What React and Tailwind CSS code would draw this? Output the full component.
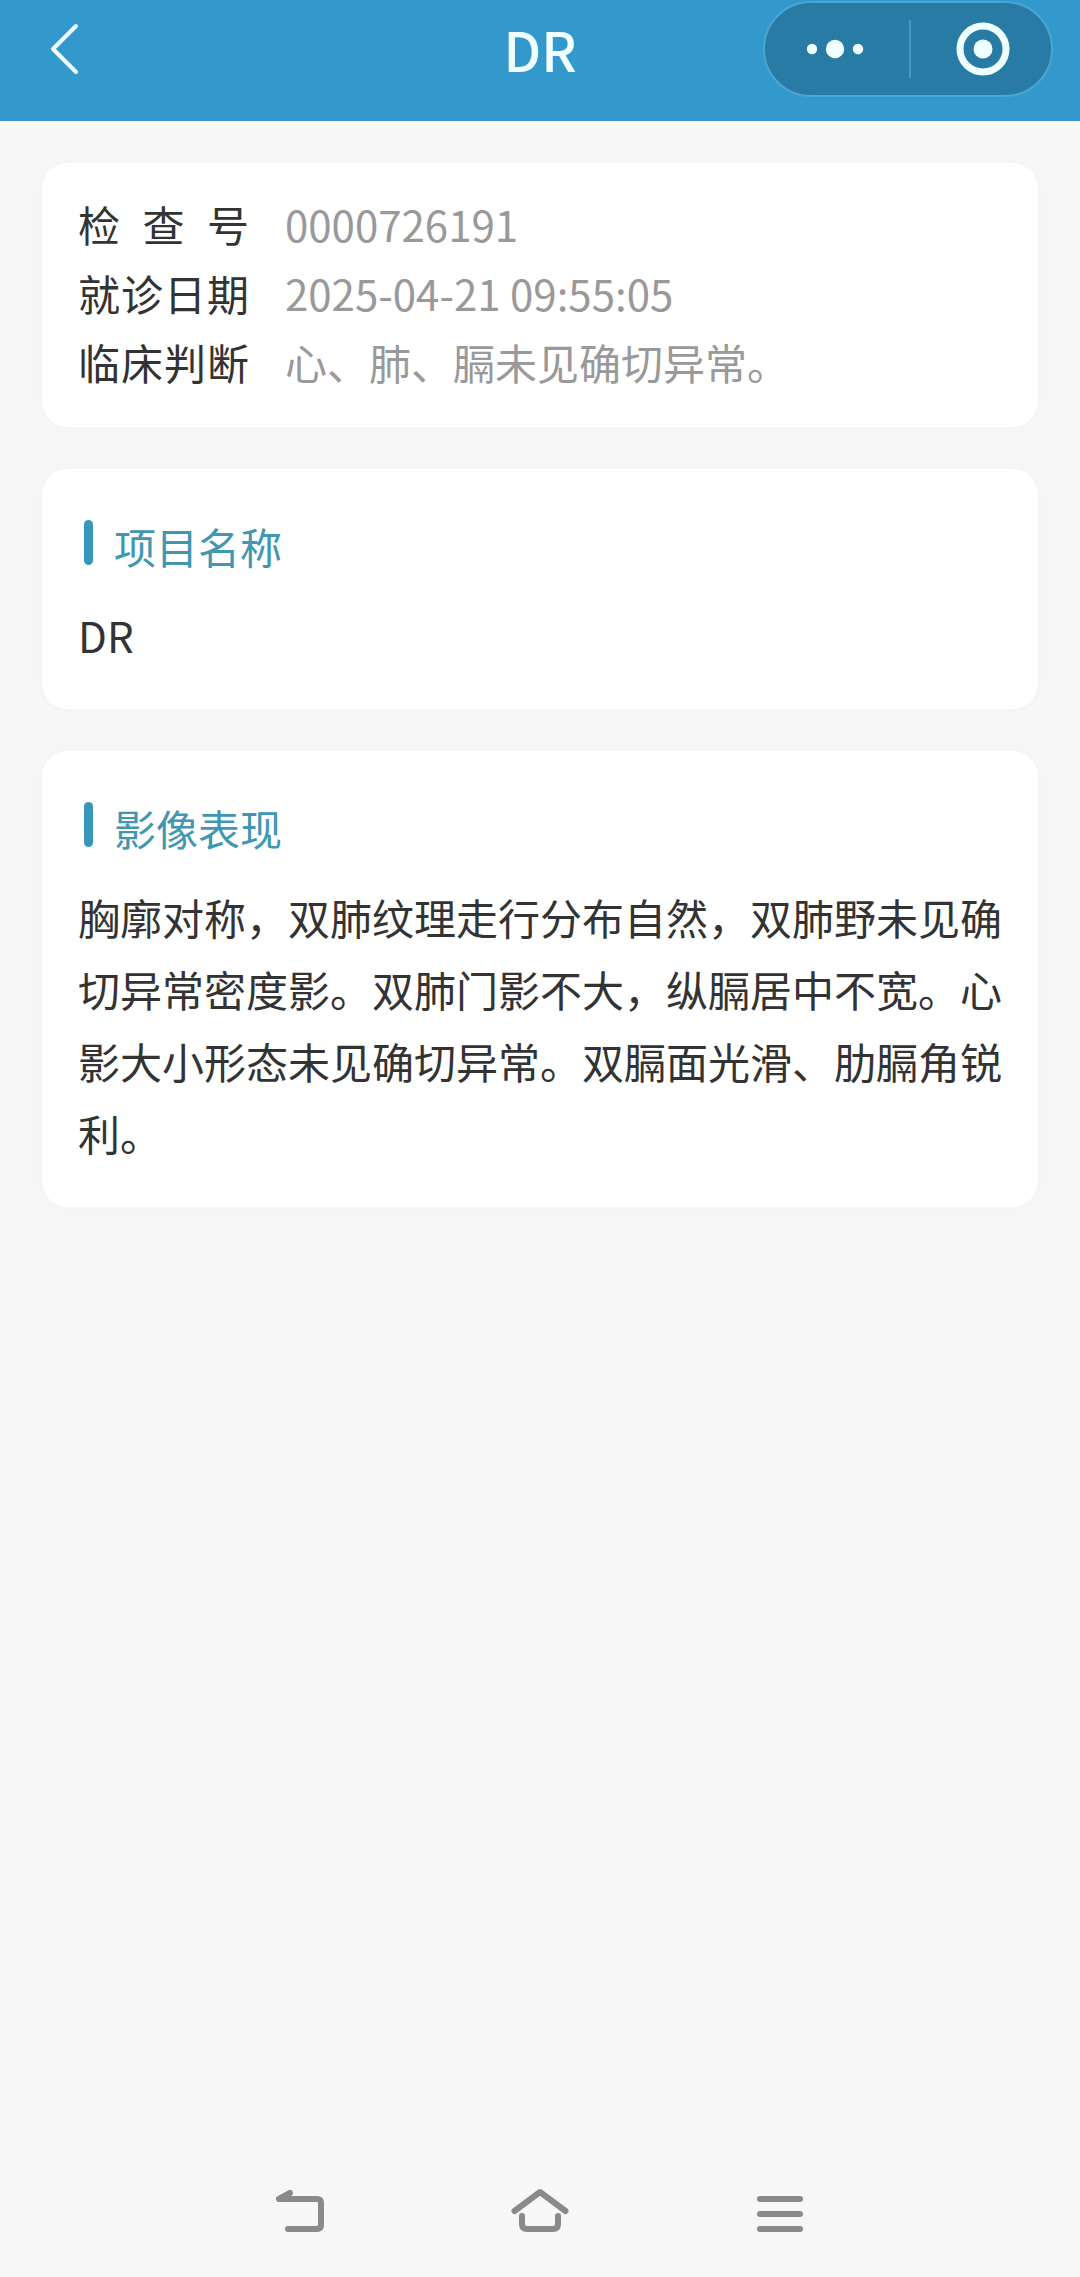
import React from "react";

function Header() {
  return (
    <header className="grid h-[121px] grid-cols-[1fr_auto_1fr] items-start bg-[#3399cc] text-[#f0ffff]">
      <button type="button" aria-label="返回" className="ml-9 mt-5 flex h-[58px] w-[58px] items-center justify-center">
        <svg width="58" height="58" viewBox="0 0 58 58" fill="none" stroke="currentColor" strokeWidth="4" strokeLinecap="round" strokeLinejoin="round">
          <path d="M40 6 L17 29 L40 52" />
        </svg>
      </button>
      <h1 className="mt-2.5 text-[54px] leading-[78px] font-medium">DR</h1>
      <div className="mt-px mr-[27px] flex h-24 w-[290px] items-center justify-self-end rounded-full border-2 border-[#4aa6d3] bg-[#277ba5]">
        <button type="button" aria-label="更多" className="flex h-full w-36 items-center justify-center pr-1">
          <svg width="60" height="20" viewBox="0 0 60 20" fill="currentColor">
            <circle cx="7" cy="10" r="5.2" />
            <circle cx="30" cy="10" r="9.2" />
            <circle cx="53" cy="10" r="5.2" />
          </svg>
        </button>
        <span className="h-[58px] w-0.5 bg-[#4499bf]" />
        <button type="button" aria-label="关闭" className="flex h-full flex-1 items-center justify-center pl-1">
          <svg width="54" height="54" viewBox="0 0 54 54">
            <circle cx="27" cy="27" r="23" fill="none" stroke="currentColor" strokeWidth="7" />
            <circle cx="27" cy="27" r="9.5" fill="currentColor" />
          </svg>
        </button>
      </div>
    </header>
  );
}

function Card({ children, className }) {
  return (
    <section className={`rounded-[26px] bg-white px-9 shadow-[0_0_20px_rgba(0,0,0,0.025)] ${className}`}>
      {children}
    </section>
  );
}

function Row({ label, children }) {
  return (
    <div className="flex leading-[69px]">
      <dt className="flex w-[171px] shrink-0 justify-between text-[#333333]">
        {label.split("").map((c) => (
          <span key={c}>{c}</span>
        ))}
      </dt>
      <dd className="ml-9 text-[#999999]">{children}</dd>
    </div>
  );
}

function SectionTitle({ children }) {
  return (
    <h2 className="flex items-start pl-1.5 leading-[58px] text-[#3f97b0]">
      <span className="mt-[3px] mr-[21px] h-[45px] w-[9px] rounded-full bg-[#3996bb]" />
      {children}
    </h2>
  );
}

function NavBar() {
  return (
    <nav className="flex justify-center pb-[34px] text-[#8a8a8a]">
      <button type="button" aria-label="返回上一页" className="flex w-2/9 justify-center">
        <svg width="60" height="60" viewBox="0 0 60 60" fill="none" stroke="currentColor" strokeWidth="6" strokeLinecap="round" strokeLinejoin="round">
          <path d="M20 10 L9 16 H47 Q51 16 51 20 V42 Q51 46 47 46 H18" />
          <path d="M20 10 L9 16 H18 Z" fill="currentColor" stroke="none" />
        </svg>
      </button>
      <button type="button" aria-label="主屏幕" className="flex w-2/9 justify-center">
        <svg width="60" height="60" viewBox="0 0 60 60" fill="none" stroke="currentColor" strokeWidth="6" strokeLinecap="round" strokeLinejoin="round">
          <path d="M4.500 28 L30 9 L55.500 28" />
          <path d="M12 33 V41 Q12 46 17 46 H43 Q48 46 48 41 V33" />
        </svg>
      </button>
      <button type="button" aria-label="最近任务" className="flex w-2/9 justify-center">
        <svg width="60" height="60" viewBox="0 0 60 60" fill="none" stroke="currentColor" strokeWidth="6" strokeLinecap="round">
          <path d="M10 16 H50 M10 31 H50 M10 46 H50" />
        </svg>
      </button>
    </nav>
  );
}

export default function App() {
  return (
    <div lang="zh-CN" className="flex min-h-screen flex-col bg-[#f7f7f7] font-['Noto_Sans_CJK_SC',sans-serif] text-[42px]">
      <Header />
      <main className="flex flex-1 flex-col gap-[42px] p-[42px]">
        <Card className="pt-[26px] pb-[31px]">
          <dl>
            <Row label="检查号">0000726191</Row>
            <Row label="就诊日期">2025-04-21 09:55:05</Row>
            <Row label="临床判断">心、肺、膈未见确切异常。</Row>
          </dl>
        </Card>
        <Card className="pt-12 pb-[38px]">
          <SectionTitle>项目名称</SectionTitle>
          <p className="mt-6 leading-[72px] text-[#333333]">DR</p>
        </Card>
        <Card className="pt-12 pb-[38px]">
          <SectionTitle>影像表现</SectionTitle>
          <p className="mt-6 leading-[72px] text-[#333333]">
            胸廓对称，双肺纹理走行分布自然，双肺野未见确切异常密度影。双肺门影不大，纵膈居中不宽。心影大小形态未见确切异常。双膈面光滑、肋膈角锐利。
          </p>
        </Card>
      </main>
      <NavBar />
    </div>
  );
}
